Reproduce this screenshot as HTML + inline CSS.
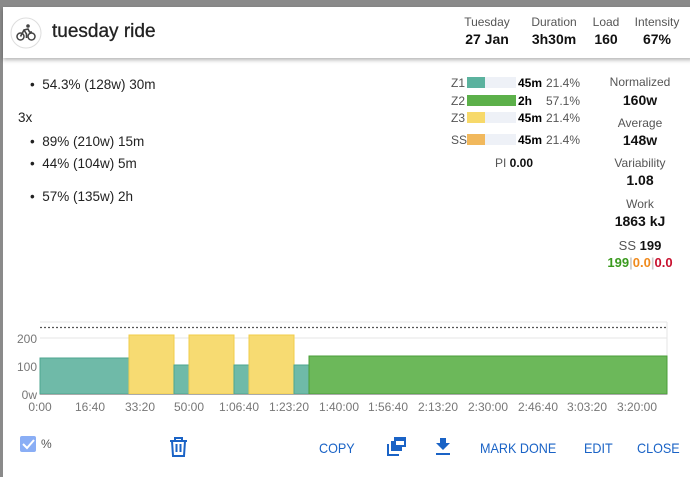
<!DOCTYPE html>
<html><head><style>
body{margin:0;width:690px;height:473px;background:#8a8a8a;font-family:"Liberation Sans",sans-serif;position:relative;overflow:hidden}
.dlg{position:absolute;left:3px;top:7px;width:690px;height:470px;background:#fff}
.hdr{position:absolute;left:3px;top:7px;width:690px;height:51px;background:#fff;box-shadow:0 2px 4px rgba(0,0,0,.3)}
.t{position:absolute;white-space:nowrap}
.c{transform:translateX(-50%);text-align:center}
.lab{font-size:12px;color:#555}
.val{font-size:14px;font-weight:bold;color:#111}
.b{font-size:13.5px;color:#222}
.btn{font-size:14px;color:#1a63c6;transform-origin:0 0;transform:scaleX(0.9)}
.bar{position:absolute;height:11px}
</style></head><body>
<div class="dlg"></div>
<div class="hdr"></div>
<svg class="t" style="left:10px;top:17px" width="32" height="32" viewBox="0 0 32 32">
<circle cx="16" cy="16" r="15" fill="#fff" stroke="#ddd"/>
<circle cx="10.5" cy="19.5" r="3.5" fill="none" stroke="#444" stroke-width="1.5"/>
<circle cx="21.5" cy="19.5" r="3.5" fill="none" stroke="#444" stroke-width="1.5"/>
<circle cx="18" cy="9" r="1.8" fill="#444"/>
<path d="M10.5 19.5 L14 13 L18 12 L19.5 15 L22 15 M14 13 L16.5 17 L16.5 21" fill="none" stroke="#444" stroke-width="1.6"/>
</svg>
<div class="t" style="left:52px;top:21px;font-size:19px;color:#222;-webkit-text-stroke:0.3px #222">tuesday ride</div>
<div class="t c lab" style="left:487px;top:15px">Tuesday</div><div class="t c val" style="left:487px;top:31px">27 Jan</div>
<div class="t c lab" style="left:554px;top:15px">Duration</div><div class="t c val" style="left:554px;top:31px">3h30m</div>
<div class="t c lab" style="left:606px;top:15px">Load</div><div class="t c val" style="left:606px;top:31px">160</div>
<div class="t c lab" style="left:657px;top:15px">Intensity</div><div class="t c val" style="left:657px;top:31px">67%</div>

<div class="t b" style="left:30px;top:77px">•&nbsp; 54.3% (128w) 30m</div>
<div class="t b" style="left:18px;top:110px">3x</div>
<div class="t b" style="left:30px;top:134px">•&nbsp; 89% (210w) 15m</div>
<div class="t b" style="left:30px;top:156px">•&nbsp; 44% (104w) 5m</div>
<div class="t b" style="left:30px;top:189px">•&nbsp; 57% (135w) 2h</div>

<div class="t lab" style="left:451px;top:76px">Z1</div><div class="bar" style="left:467px;top:77px;width:49px;background:#eef1f7"></div><div class="bar" style="left:467px;top:77px;width:18px;background:#5bb29e"></div><div class="t" style="left:518px;top:76px;font-size:12px;font-weight:bold">45m</div><div class="t lab" style="left:546px;top:76px">21.4%</div>
<div class="t lab" style="left:451px;top:94px">Z2</div><div class="bar" style="left:467px;top:95px;width:49px;background:#5cb04a"></div><div class="t" style="left:518px;top:94px;font-size:12px;font-weight:bold">2h</div><div class="t lab" style="left:546px;top:94px">57.1%</div>
<div class="t lab" style="left:451px;top:111px">Z3</div><div class="bar" style="left:467px;top:112px;width:49px;background:#eef1f7"></div><div class="bar" style="left:467px;top:112px;width:18px;background:#f7d96a"></div><div class="t" style="left:518px;top:111px;font-size:12px;font-weight:bold">45m</div><div class="t lab" style="left:546px;top:111px">21.4%</div>
<div class="t lab" style="left:451px;top:133px">SS</div><div class="bar" style="left:467px;top:134px;width:49px;background:#eef1f7"></div><div class="bar" style="left:467px;top:134px;width:18px;background:#f1b85c"></div><div class="t" style="left:518px;top:133px;font-size:12px;font-weight:bold">45m</div><div class="t lab" style="left:546px;top:133px">21.4%</div>
<div class="t c" style="left:514px;top:156px;font-size:12px;color:#555">PI <b style="color:#111">0.00</b></div>

<div class="t c lab" style="left:640px;top:75px">Normalized</div><div class="t c val" style="left:640px;top:92px">160w</div>
<div class="t c lab" style="left:640px;top:116px">Average</div><div class="t c val" style="left:640px;top:132px">148w</div>
<div class="t c lab" style="left:640px;top:156px">Variability</div><div class="t c val" style="left:640px;top:172px">1.08</div>
<div class="t c lab" style="left:640px;top:197px">Work</div><div class="t c val" style="left:640px;top:213px">1863 kJ</div>
<div class="t c" style="left:640px;top:238px;font-size:13px;color:#555">SS <b style="color:#111">199</b></div>
<div class="t c" style="left:640px;top:255px;font-size:13px;font-weight:bold"><span style="color:#3a9a1e">199</span><span style="color:#ccc">|</span><span style="color:#f08a1c">0.0</span><span style="color:#ccc">|</span><span style="color:#c8102e">0.0</span></div>

<svg class="t" style="left:0;top:0" width="690" height="473">
<g stroke="#e6e6e6" stroke-width="1">
<line x1="40" y1="322" x2="667" y2="322"/><line x1="40" y1="338" x2="667" y2="338"/><line x1="40" y1="366" x2="667" y2="366"/>
<line x1="667" y1="322" x2="667" y2="394"/>
</g>
<line x1="40" y1="327.5" x2="667" y2="327.5" stroke="#555" stroke-dasharray="2,2" stroke-width="1.3"/>
<g stroke-width="1">
<rect x="40" y="358" width="89" height="36" fill="#6fbaa8" stroke="#4ea58f"/>
<rect x="129" y="335" width="45" height="59" fill="#f7db72" stroke="#f2cd4a"/>
<rect x="174" y="365" width="15" height="29" fill="#6fbaa8" stroke="#4ea58f"/>
<rect x="189" y="335" width="45" height="59" fill="#f7db72" stroke="#f2cd4a"/>
<rect x="234" y="365" width="15" height="29" fill="#6fbaa8" stroke="#4ea58f"/>
<rect x="249" y="335" width="45" height="59" fill="#f7db72" stroke="#f2cd4a"/>
<rect x="294" y="365" width="15" height="29" fill="#6fbaa8" stroke="#4ea58f"/>
<rect x="309" y="356" width="358" height="38" fill="#6cb85a" stroke="#4a9e38"/>
</g>
<line x1="40" y1="394.5" x2="667" y2="394.5" stroke="#aaa"/>
<g font-size="12" fill="#777" font-family="Liberation Sans" text-anchor="end">
<text x="37" y="343">200</text><text x="37" y="371">100</text><text x="37" y="399">0w</text>
</g>
<g font-size="12" fill="#777" font-family="Liberation Sans" text-anchor="middle">
<text x="40" y="411">0:00</text><text x="90" y="411">16:40</text><text x="140" y="411">33:20</text><text x="189" y="411">50:00</text><text x="239" y="411">1:06:40</text><text x="289" y="411">1:23:20</text><text x="339" y="411">1:40:00</text><text x="388" y="411">1:56:40</text><text x="438" y="411">2:13:20</text><text x="488" y="411">2:30:00</text><text x="538" y="411">2:46:40</text><text x="587" y="411">3:03:20</text><text x="637" y="411">3:20:00</text>
</g>
<rect x="20" y="436" width="16" height="16" rx="2" fill="#8aaef5"/>
<path d="M23 444 L27 448 L34 440" fill="none" stroke="#fff" stroke-width="2"/>
<text x="41" y="448" font-size="12" fill="#555" font-family="Liberation Sans">%</text>
<g fill="none" stroke="#1a63c6" stroke-width="2">
<path d="M170 441 H187 M175 441 V438 H182 V441 M172 441 L173 456 H184 L185 441 M176.5 444 V452 M180.5 444 V452"/>
</g>
<rect x="394" y="437" width="12" height="10" fill="#1a63c6"/>
<rect x="396" y="441" width="8" height="4" fill="#fff"/>
<path d="M391 441 V451 H402 V447 H394 V441 Z" fill="#1a63c6"/>
<path d="M388 444 V455 H399" fill="none" stroke="#1a63c6" stroke-width="2"/>
<path d="M440 438 H446 V443 H450 L443 450 L436 443 H440 Z" fill="#1a63c6"/>
<rect x="436" y="453" width="14" height="2" fill="#1a63c6"/>
</svg>
<div class="t btn" style="left:319px;top:440px">COPY</div>
<div class="t btn" style="left:480px;top:440px">MARK DONE</div>
<div class="t btn" style="left:584px;top:440px">EDIT</div>
<div class="t btn" style="left:637px;top:440px">CLOSE</div>
</body></html>
